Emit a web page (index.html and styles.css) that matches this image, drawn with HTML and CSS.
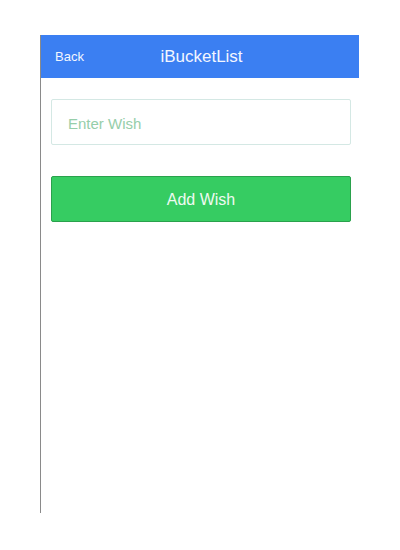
FILE: index.html
```html
<!DOCTYPE html>
<html>
<head>
<meta charset="utf-8">
<link rel="stylesheet" href="styles.css">
</head>
<body>
<div class="screen">
  <header class="bar">
    <span class="back">Back</span>
    <span class="title">iBucketList</span>
  </header>
  <main class="content">
    <input class="wish" type="text" placeholder="Enter Wish">
    <button class="add">Add Wish</button>
  </main>
</div>
</body>
</html>
```
FILE: styles.css
```css
html, body {
  margin: 0;
  padding: 0;
  background: #fff;
  font-family: "Liberation Sans", Arial, sans-serif;
}
.screen {
  margin: 35px 0 0 40px;
  width: 318px;
  height: 478px;
  border-left: 1px solid #8a8a8a;
}
.bar {
  position: relative;
  height: 43px;
  background: #3b7ff2;
  color: #f2f6ff;
  display: flex;
  align-items: center;
  justify-content: center;
}
.back {
  position: absolute;
  left: 14px;
  top: 14px;
  font-size: 13px;
}
.title {
  font-size: 17px;
  margin-left: 3px;
}
.content {
  padding: 21px 0 0 10px;
  display: flex;
  flex-direction: column;
  gap: 31px;
}
.wish {
  box-sizing: border-box;
  width: 300px;
  height: 46px;
  border: 1px solid #d4e8e4;
  border-radius: 2px;
  padding: 2px 16px 0;
  font-family: "Liberation Sans", Arial, sans-serif;
  font-size: 15px;
  outline: none;
}
.wish::placeholder {
  color: #96ceaa;
}
.add {
  box-sizing: border-box;
  width: 300px;
  height: 46px;
  background: #36cc62;
  border: 1px solid #2aa14c;
  border-radius: 2px;
  color: #eefaf1;
  font-family: "Liberation Sans", Arial, sans-serif;
  font-size: 16px;
  padding: 2px 0 0;
}
```
